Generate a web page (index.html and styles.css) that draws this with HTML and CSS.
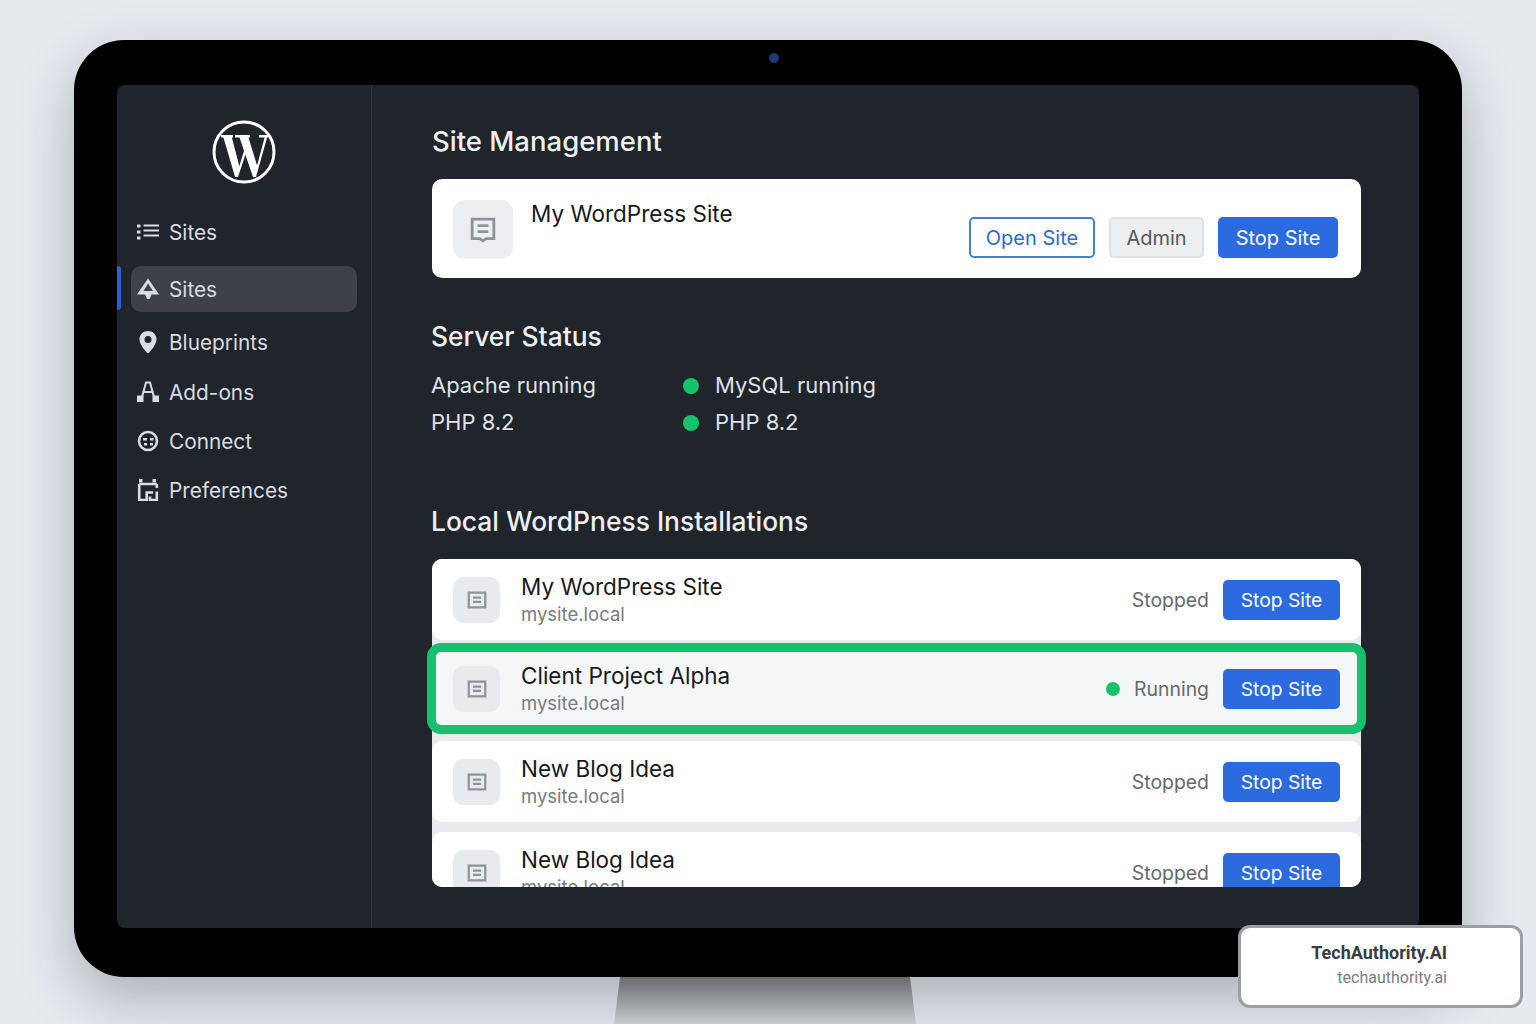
FILE: index.html
```html
<!DOCTYPE html>
<html lang="en">
<head>
  <meta charset="UTF-8" />
  <title>Site Management</title>
  <link rel="stylesheet" href="styles.css">
</head>
<body>

  <svg class="sprite" width="0" height="0">
    <symbol id="doc" viewBox="0 0 24 24">
      <path d="M3 4h18v16H3z M7.5 9.5h9 M7.5 14h9" fill="none" stroke="currentColor" stroke-width="2.4"/>
    </symbol>
  </svg>

  <div class="monitor">
    <span class="camera"></span>
    <div class="screen">

      <aside class="sidebar">
        <svg class="logo" viewBox="0 0 64 64">
          <circle cx="32" cy="32" r="30" fill="none" stroke="#fff" stroke-width="3"/>
          <path fill="#fff" d="M9 15h12v2.500H9z M23 15h15v2.500H23z M47 15h9v2.500h-9z M11 16h8.500l8 31-3 10h-1.500z M33.500 26l1.500 4-9 27h-2z M27 16h9l9.500 31-3 10h-1.500z M53 16h2.500L44 57h-2z"/>
        </svg>

        <ul class="nav">
          <li class="nav-item">
            <svg class="nav-icon" viewBox="0 0 22 22"><path d="M0 3.500h3.500v3H0z M0 9.500h3.500v3H0z M0 15.500h3.500v3H0z" fill="currentColor"/><path d="M6.500 4.500H22 M6.500 9.500H22 M6.500 14.500H22" stroke="currentColor" stroke-width="1.800" fill="none"/></svg>
            Sites
          </li>
          <li class="nav-item active">
            <svg class="nav-icon" viewBox="0 0 22 22"><path fill="currentColor" fill-rule="evenodd" d="M11 .5 22 16.500h-7.500L12.500 21h-2.500L8 16.500H0zM11 5.500 6.500 13h9.500z"/></svg>
            Sites
          </li>
          <li class="nav-item">
            <svg class="nav-icon" viewBox="0 0 22 22"><path fill="currentColor" fill-rule="evenodd" d="M11 0c4.600 0 8.500 3.500 8.500 8.300C19.500 13 15 18.500 11 23 7 18.500 2.500 13 2.500 8.300 2.500 3.500 6.400 0 11 0zm0 5a3.500 3.500 0 1 0 0 7 3.500 3.500 0 0 0 0-7z"/></svg>
            Blueprints
          </li>
          <li class="nav-item">
            <svg class="nav-icon" viewBox="0 0 22 22"><path d="M5 16 9 1.500h4L17 16 M7 11h8" fill="none" stroke="currentColor" stroke-width="2"/><path d="M0 14.500h6.500V21H0z M15.500 14.500H22V21h-6.500z" fill="currentColor"/></svg>
            Add-ons
          </li>
          <li class="nav-item">
            <svg class="nav-icon" viewBox="0 0 22 22"><circle cx="11" cy="11" r="9" fill="none" stroke="currentColor" stroke-width="2.600"/><path d="M6 8h4v2.500H6z M13 8h3.500v2.500H13z M7 13h3v2.500H7z M13 13h3v2.500h-3z" fill="currentColor"/></svg>
            Connect
          </li>
          <li class="nav-item">
            <svg class="nav-icon" viewBox="0 0 22 22"><path d="M2 0h3.500v3.500H2z M15.500 0H19v3.500h-3.500z" fill="currentColor"/><path d="M2.200 5h17.500 M2.200 5v16h7.500v-7.500h6.500 M19.800 5v4 M19.800 12.500V21H13v-3.500" fill="none" stroke="currentColor" stroke-width="2.600"/></svg>
            Preferences
          </li>
        </ul>
      </aside>

      <main class="content">
        <h2>Site Management</h2>
        <section class="site-card">
          <div class="site-icon large">
            <svg width="28" height="26" viewBox="0 0 24 24"><path d="M2 2h20v18h-7l-3 2-3-2H2z M7 8h10 M7 13.500h10" fill="none" stroke="currentColor" stroke-width="2.600"/></svg>
          </div>
          <div class="site-title">My WordPress Site</div>
          <div class="actions">
            <button class="btn outline">Open Site</button>
            <button class="btn grey">Admin</button>
            <button class="btn primary wide">Stop Site</button>
          </div>
        </section>

        <h2 class="server-heading">Server Status</h2>
        <div class="status-grid">
          <span>Apache running</span>
          <span class="status-dot"></span>
          <span>MySQL running</span>
          <span>PHP 8.2</span>
          <span class="status-dot"></span>
          <span>PHP 8.2</span>
        </div>

        <h2 class="local-heading">Local WordPness Installations</h2>
        <section class="site-list">
          <div class="row">
            <div class="site-icon"><svg width="22" height="22"><use href="#doc"/></svg></div>
            <div class="row-text">
              <div class="row-name">My WordPress Site</div>
              <div class="row-host">mysite.local</div>
            </div>
            <span class="row-state">Stopped</span>
            <button class="btn primary">Stop Site</button>
          </div>

          <div class="row running">
            <div class="site-icon"><svg width="22" height="22"><use href="#doc"/></svg></div>
            <div class="row-text">
              <div class="row-name">Client Project Alpha</div>
              <div class="row-host">mysite.local</div>
            </div>
            <span class="running-dot"></span>
            <span class="row-state">Running</span>
            <button class="btn primary">Stop Site</button>
          </div>

          <div class="row">
            <div class="site-icon"><svg width="22" height="22"><use href="#doc"/></svg></div>
            <div class="row-text">
              <div class="row-name">New Blog Idea</div>
              <div class="row-host">mysite.local</div>
            </div>
            <span class="row-state">Stopped</span>
            <button class="btn primary">Stop Site</button>
          </div>

          <div class="row-clip">
            <div class="row">
              <div class="site-icon"><svg width="22" height="22"><use href="#doc"/></svg></div>
              <div class="row-text">
                <div class="row-name">New Blog Idea</div>
                <div class="row-host">mysite.local</div>
              </div>
              <span class="row-state">Stopped</span>
              <button class="btn primary">Stop Site</button>
            </div>
          </div>
        </section>
      </main>

    </div>
  </div>
  <div class="stand"></div>

  <div class="badge">
    <strong>TechAuthority.AI</strong>
    <span>techauthority.ai</span>
  </div>

</body>
</html>
```

FILE: styles.css
```css
* {
  box-sizing: border-box;
}

html, body {
  height: 1024px;
  overflow: hidden;
}

body {
  margin: 0;
  background: #e6e9ee;
  font-family: Inter, "Liberation Sans", sans-serif;
  color: #fff;
}

.sprite {
  position: absolute;
}

/* monitor */
.monitor {
  position: relative;
  width: 1388px;
  height: 937px;
  margin: 40px 0 0 74px;
  padding: 45px 43px 49px;
  background: #000;
  border-radius: 50px;
  box-shadow: 0 22px 56px rgba(40, 46, 56, 0.3);
}

.camera {
  position: absolute;
  top: 13px;
  left: 695px;
  width: 10px;
  height: 10px;
  border-radius: 50%;
  background: #1d3a72;
}

.stand {
  width: 302px;
  height: 47px;
  margin-left: 614px;
  background: linear-gradient(180deg, #686a6e 0%, #c6c9cd 100%);
  clip-path: polygon(6px 0, 296px 0, 302px 100%, 0 100%);
}

.screen {
  display: flex;
  height: 100%;
  background: #20242b;
  border-radius: 8px;
}

/* sidebar */
.sidebar {
  width: 255px;
  flex-shrink: 0;
  padding: 35px 14px 0;
  border-right: 1px solid #363b43;
}

.logo {
  display: block;
  width: 64px;
  height: 64px;
  margin: 0 auto 25px;
}

.nav {
  list-style: none;
  margin: 0;
  padding: 0;
  display: flex;
  flex-direction: column;
  gap: 3px;
}

.nav-item {
  position: relative;
  display: flex;
  align-items: center;
  gap: 10px;
  height: 46px;
  padding-left: 6px;
  font-size: 20.8px;
  color: #d9dce0;
}

.nav-item:nth-child(4) {
  margin-top: 1px;
}

.nav-icon {
  width: 22px;
  height: 22px;
  flex-shrink: 0;
}

.nav-item.active {
  margin: 8px 0 4px;
  background: #3e4148;
  border-radius: 10px;
}

.nav-item.active::before {
  content: "";
  position: absolute;
  left: -14px;
  top: 0;
  width: 4px;
  height: 44px;
  background: #2563d8;
  border-radius: 0 3px 3px 0;
}

/* main */
.content {
  flex: 1;
  padding: 40px 58px 0 60px;
}

h2 {
  margin: 0;
  font-size: 27.5px;
  line-height: 32px;
  font-weight: 500;
  color: #eef0f2;
}

.site-card {
  display: flex;
  align-items: flex-start;
  height: 99px;
  margin-top: 22px;
  padding: 21px 23px 20px 21px;
  background: #fff;
  border-radius: 10px;
}

.site-icon {
  display: flex;
  align-items: center;
  justify-content: center;
  width: 47px;
  height: 46px;
  flex-shrink: 0;
  background: #e8eaed;
  border-radius: 10px;
  color: #8f9398;
}

.site-icon.large {
  width: 60px;
  height: 59px;
  border-radius: 12px;
  background: #eceef1;
}

.site-title {
  margin: -1px 0 0 18px;
  font-size: 22.5px;
  line-height: 30px;
  color: #17191c;
}

.actions {
  display: flex;
  gap: 14px;
  align-self: flex-end;
  margin-left: auto;
}

.btn {
  height: 40px;
  padding: 0;
  border: none;
  border-radius: 5px;
  font-family: inherit;
  font-size: 20px;
  white-space: nowrap;
}

.btn.primary {
  background: #2b6bdf;
  color: #fff;
}

.btn.wide {
  width: 120px;
  height: 41px;
}

.btn.outline {
  width: 126px;
  height: 41px;
  background: #fff;
  border: 2px solid #3f83d4;
  color: #2b6bd0;
}

.btn.grey {
  width: 95px;
  height: 41px;
  background: #eceef0;
  border: 2px solid #dfe1e4;
  color: #55585c;
}

.server-heading {
  margin: 42px 0 0 -1px;
  font-size: 26.4px;
}

.status-grid {
  display: grid;
  grid-template-columns: 236px 16px auto;
  column-gap: 16px;
  align-items: center;
  margin: 15px 0 0 -1px;
  font-size: 22px;
  line-height: 37px;
  color: #dfe2e6;
}

.status-dot {
  width: 16px;
  height: 16px;
  border-radius: 50%;
  background: #16c26b;
}

.local-heading {
  margin: 64px 0 0 -1px;
  font-size: 26.4px;
}

/* list */
.site-list {
  margin-top: 22px;
  background: #e9ebee;
  border-radius: 10px;
}

.row {
  display: flex;
  align-items: center;
  height: 81px;
  padding: 0 21px;
  background: #fff;
  border-radius: 10px;
}

.row.running {
  height: 91px;
  margin: 3px -5px 7px;
  padding: 0 17px;
  background: #f5f6f7;
  border: 9px solid #18c06d;
  border-radius: 14px;
}

.row-clip {
  height: 55px;
  margin-top: 10px;
  overflow: hidden;
  border-radius: 10px;
}

.row-text {
  flex: 1;
  margin-left: 21px;
  padding-bottom: 2px;
}

.row-name {
  font-size: 22.5px;
  line-height: 30px;
  color: #17191c;
}

.row-host {
  font-size: 18.5px;
  line-height: 24px;
  color: #787b80;
}

.row-state {
  margin-right: 14px;
  font-size: 19.4px;
  color: #66696d;
}

.running-dot {
  width: 14px;
  height: 14px;
  margin-right: 14px;
  border-radius: 50%;
  background: #16c26b;
}

.row .btn {
  width: 117px;
  font-size: 19.3px;
}

/* watermark */
.badge {
  position: absolute;
  left: 1238px;
  top: 925px;
  width: 285px;
  height: 83px;
  display: flex;
  flex-direction: column;
  align-items: flex-end;
  justify-content: center;
  gap: 5px;
  padding: 0 73px 4px 0;
  background: #fff;
  border: 3px solid #9c9ea5;
  border-radius: 12px;
  font-family: Roboto, sans-serif;
}

.badge strong {
  font-size: 18px;
  color: #3b3c3f;
}

.badge span {
  font-size: 16px;
  color: #7c7e83;
}
```
